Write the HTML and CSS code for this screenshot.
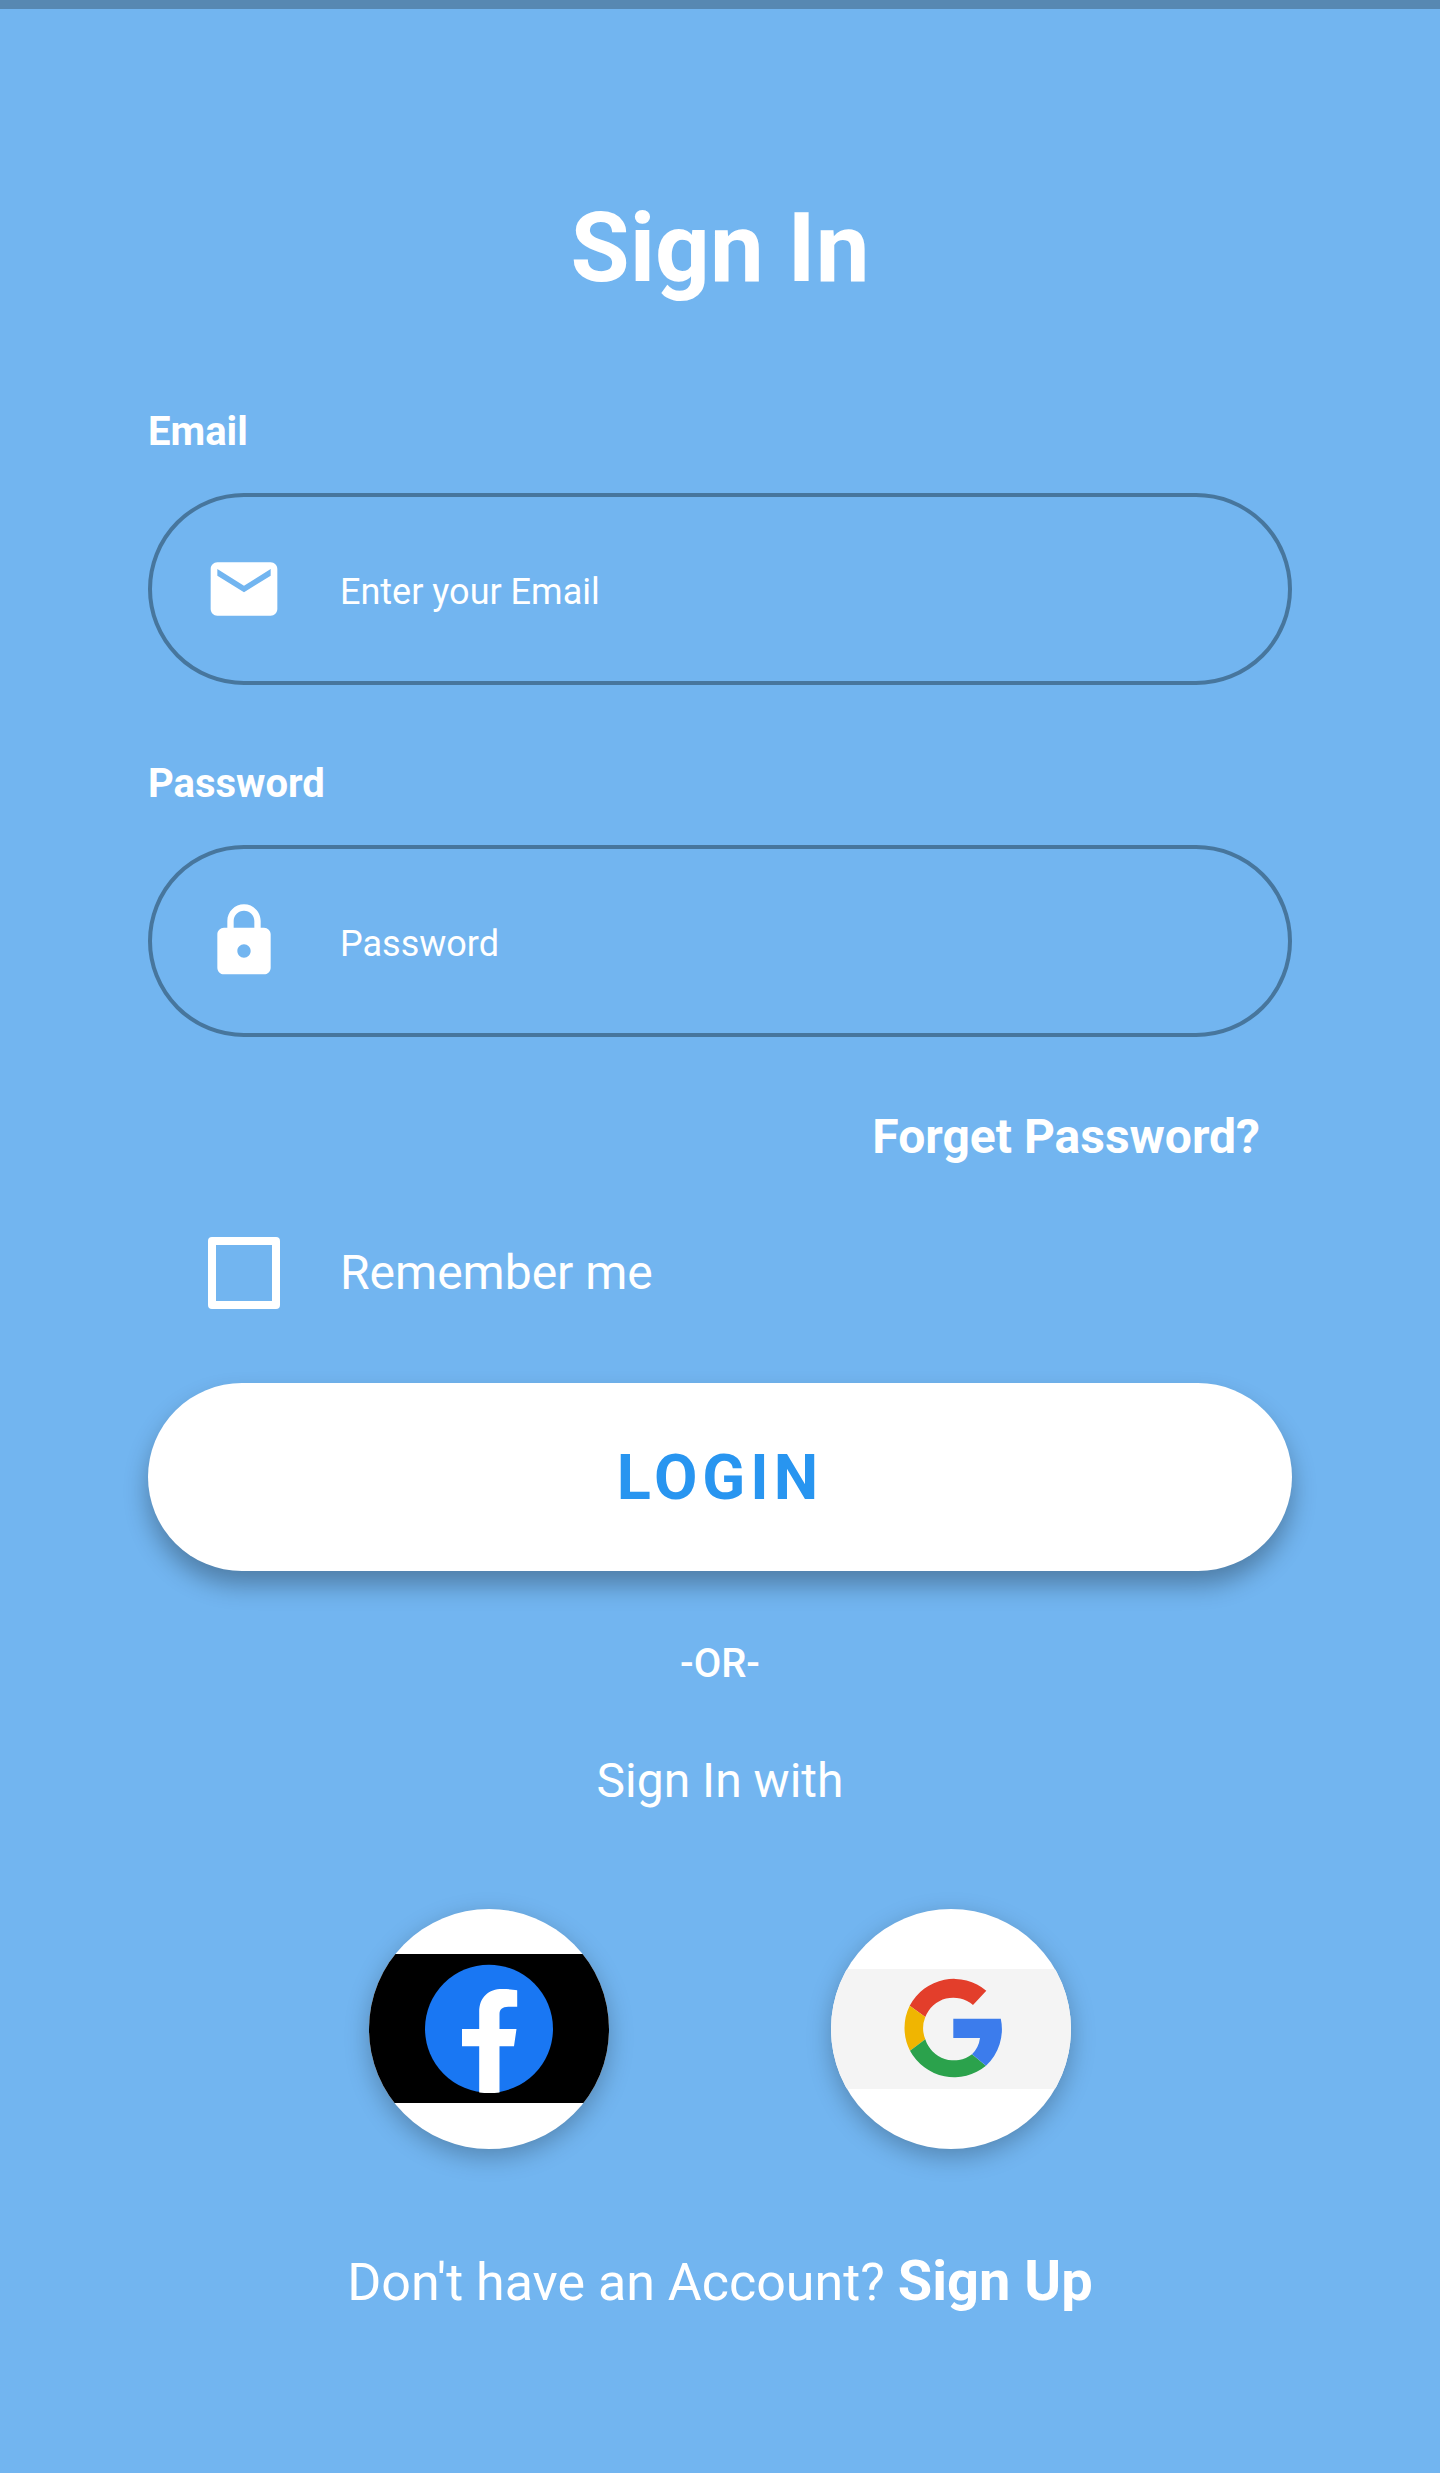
FILE: index.html
```html
<!DOCTYPE html>
<html lang="en">
<head>
<meta charset="utf-8">
<meta name="viewport" content="width=device-width, initial-scale=1">
<title>Sign In</title>
<link rel="stylesheet" href="styles.css">
</head>
<body>
<div class="status-bar"></div>
<main class="page">
  <h1 class="title">Sign In</h1>
  <form class="form">
    <div class="group">
      <label class="label" for="email">Email</label>
      <div class="field">
        <svg class="icon" viewBox="0 0 24 24" aria-hidden="true"><path d="M20 4H4c-1.100 0-1.990.9-1.990 2L2 18c0 1.100.9 2 2 2h16c1.100 0 2-.9 2-2V6c0-1.100-.9-2-2-2zm0 4l-8 5-8-5V6l8 5 8-5v2z"/></svg>
        <input class="input" id="email" type="email" placeholder="Enter your Email">
      </div>
    </div>
    <div class="group">
      <label class="label" for="password">Password</label>
      <div class="field">
        <svg class="icon" viewBox="0 0 24 24" aria-hidden="true"><path d="M18 8h-1V6c0-2.760-2.240-5-5-5S7 3.240 7 6v2H6c-1.100 0-2 .9-2 2v10c0 1.100.9 2 2 2h12c1.100 0 2-.9 2-2V10c0-1.100-.9-2-2-2zm-6 9c-1.100 0-2-.9-2-2s.9-2 2-2 2 .9 2 2-.9 2-2 2zm3.100-9H8.900V6c0-1.710 1.390-3.100 3.100-3.100s3.100 1.390 3.100 3.100v2z"/></svg>
        <input class="input" id="password" type="password" placeholder="Password">
      </div>
    </div>
    <a class="forgot" href="#">Forget Password?</a>
    <div class="remember">
      <input class="checkbox" id="remember" type="checkbox">
      <label for="remember">Remember me</label>
    </div>
    <button class="login" type="submit">LOGIN</button>
  </form>
  <p class="or">-OR-</p>
  <p class="with">Sign In with</p>
  <div class="socials">
    <button class="social" type="button" aria-label="Facebook">
      <svg class="logo" viewBox="0 0 240 240" aria-hidden="true">
        <path d="M0 45h240v149H0z"/>
        <circle cx="120" cy="119.700" r="64" fill="#1977f3"/>
        <path fill="#fff" d="M110.200 183.500V137.300H93V120h17.200v-17c0-15 9.500-23 23-23 5.500 0 11 .5 15 1.200v16.500h-9c-6 0-8.700 3-8.700 7.300v15h17l-2.500 17.300H130.500v46.200q-10 1-20.300 0z"/>
      </svg>
    </button>
    <button class="social" type="button" aria-label="Google">
      <svg class="logo" viewBox="0 0 240 240" aria-hidden="true">
        <path fill="#f4f4f4" d="M0 60h240v120H0z"/>
        <path fill="#e33e2b" d="M155.300 81.700A50 50 0 0 0 78.700 96.700L94.300 108A30 30 0 0 1 142 96z"/>
        <path fill="#f0b501" d="M78.700 96.700A50 50 0 0 0 79 141.700L94.300 130.300A30 30 0 0 1 94.300 108z"/>
        <path fill="#2ba24c" d="M79 141.700A50 50 0 0 0 155 156.700L141 145.300A30 30 0 0 1 94.300 130.300z"/>
        <path fill="#3c7cec" d="M122.300 109.700h47.500A50 50 0 0 1 155 156.700L141 145.300A28 28 0 0 0 149 129h-26.700z"/>
      </svg>
    </button>
  </div>
  <p class="signup">Don't have an Account? <a class="signup-link" href="#">Sign Up</a></p>
</main>
</body>
</html>
```
FILE: styles.css
```css
* { box-sizing: border-box; }

body {
  margin: 0;
  background: #72b5f0;
  color: #fff;
  font-family: Roboto, "Liberation Sans", sans-serif;
}

a { color: inherit; text-decoration: none; }
p { margin: 0; }

.status-bar { height: 9px; background: #5788b2; }

.page {
  display: flex;
  flex-direction: column;
  padding: 183px 148px 159px;
}

.title {
  margin: 0 0 104px;
  font-size: 96px;
  line-height: 112px;
  font-weight: 700;
  text-align: center;
}

.form { display: flex; flex-direction: column; }

.group {
  display: flex;
  flex-direction: column;
  gap: 37px;
  margin-bottom: 75px;
}

.group + .group { margin-bottom: 72px; }

.label {
  font-size: 40px;
  line-height: 48px;
  font-weight: 700;
}

.field {
  display: flex;
  align-items: center;
  gap: 56px;
  height: 192px;
  padding: 0 52px;
  border: 4px solid #47769d;
  border-radius: 96px;
}

.icon { flex: none; width: 80px; height: 80px; fill: #fff; }

.input {
  flex: 1;
  min-width: 0;
  height: 100%;
  padding: 6px 0 0;
  border: 0;
  outline: 0;
  background: none;
  color: #fff;
  font: 400 36px Roboto, "Liberation Sans", sans-serif;
}

.input::placeholder { color: #fff; opacity: 1; }

.forgot {
  align-self: flex-end;
  margin-right: 32px;
  font-size: 48px;
  line-height: 56px;
  font-weight: 700;
}

.remember {
  display: flex;
  align-items: center;
  gap: 60px;
  margin: 72px 0 74px;
  padding-left: 60px;
  font-size: 48px;
  line-height: 56px;
}

.checkbox {
  appearance: none;
  width: 72px;
  height: 72px;
  margin: 0;
  border: 8px solid #fff;
  border-radius: 4px;
}

.checkbox:checked { background: #2196f3; }

.login {
  height: 188px;
  border: 0;
  border-radius: 94px;
  background: #fff;
  box-shadow: 0 14px 24px rgba(0, 0, 0, 0.3);
  color: #2895f0;
  font: 700 63px Roboto, "Liberation Sans", sans-serif;
  letter-spacing: 5px;
}

.or {
  margin-top: 69px;
  font-size: 40px;
  line-height: 48px;
  font-weight: 500;
  text-align: center;
}

.with {
  margin-top: 65px;
  font-size: 48px;
  line-height: 56px;
  text-align: center;
}

.socials {
  display: flex;
  justify-content: space-evenly;
  margin: 100px 0;
}

.social {
  width: 240px;
  height: 240px;
  padding: 0;
  overflow: hidden;
  border: 0;
  border-radius: 50%;
  background: #fff;
  box-shadow: 0 8px 24px rgba(0, 0, 0, 0.26);
}

.logo { display: block; width: 100%; height: 100%; }

.signup {
  font-size: 52px;
  line-height: 64px;
  text-align: center;
}

.signup-link { font-size: 56px; font-weight: 700; }
```
